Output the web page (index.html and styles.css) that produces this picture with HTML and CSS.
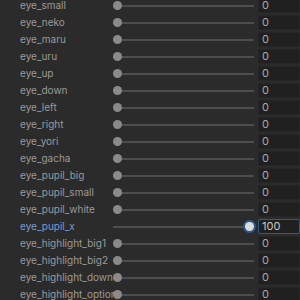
FILE: index.html
```html
<!DOCTYPE html>
<html>
<head>
<meta charset="utf-8">
<link rel="stylesheet" href="styles.css">
</head>
<body>
<div class="list">
  <div class="row"><span class="label">eye_small</span><div class="slider"><div class="track"></div><div class="knob" style="left:0%"></div></div><div class="num">0</div></div>
  <div class="row"><span class="label">eye_neko</span><div class="slider"><div class="track"></div><div class="knob" style="left:0%"></div></div><div class="num">0</div></div>
  <div class="row"><span class="label">eye_maru</span><div class="slider"><div class="track"></div><div class="knob" style="left:0%"></div></div><div class="num">0</div></div>
  <div class="row"><span class="label">eye_uru</span><div class="slider"><div class="track"></div><div class="knob" style="left:0%"></div></div><div class="num">0</div></div>
  <div class="row"><span class="label">eye_up</span><div class="slider"><div class="track"></div><div class="knob" style="left:0%"></div></div><div class="num">0</div></div>
  <div class="row"><span class="label">eye_down</span><div class="slider"><div class="track"></div><div class="knob" style="left:0%"></div></div><div class="num">0</div></div>
  <div class="row"><span class="label">eye_left</span><div class="slider"><div class="track"></div><div class="knob" style="left:0%"></div></div><div class="num">0</div></div>
  <div class="row"><span class="label">eye_right</span><div class="slider"><div class="track"></div><div class="knob" style="left:0%"></div></div><div class="num">0</div></div>
  <div class="row"><span class="label">eye_yori</span><div class="slider"><div class="track"></div><div class="knob" style="left:0%"></div></div><div class="num">0</div></div>
  <div class="row"><span class="label">eye_gacha</span><div class="slider"><div class="track"></div><div class="knob" style="left:0%"></div></div><div class="num">0</div></div>
  <div class="row"><span class="label">eye_pupil_big</span><div class="slider"><div class="track"></div><div class="knob" style="left:0%"></div></div><div class="num">0</div></div>
  <div class="row"><span class="label">eye_pupil_small</span><div class="slider"><div class="track"></div><div class="knob" style="left:0%"></div></div><div class="num">0</div></div>
  <div class="row"><span class="label">eye_pupil_white</span><div class="slider"><div class="track"></div><div class="knob" style="left:0%"></div></div><div class="num">0</div></div>
  <div class="row active"><span class="label">eye_pupil_x</span><div class="slider"><div class="track"></div><div class="knob max" style="left:100%"></div></div><div class="num">100</div></div>
  <div class="row"><span class="label">eye_highlight_big1</span><div class="slider"><div class="track"></div><div class="knob" style="left:0%"></div></div><div class="num">0</div></div>
  <div class="row"><span class="label">eye_highlight_big2</span><div class="slider"><div class="track"></div><div class="knob" style="left:0%"></div></div><div class="num">0</div></div>
  <div class="row"><span class="label">eye_highlight_down</span><div class="slider"><div class="track"></div><div class="knob" style="left:0%"></div></div><div class="num">0</div></div>
  <div class="row"><span class="label">eye_highlight_option</span><div class="slider"><div class="track"></div><div class="knob" style="left:0%"></div></div><div class="num">0</div></div>
</div>
</body>
</html>
```

FILE: styles.css
```css
html, body {
  margin: 0;
  padding: 0;
  background: #2b2b2b;
  overflow: hidden;
  height: 300px;
}
.list {
  margin-top: -3px;
  font-family: Inter, "Noto Sans", sans-serif;
  font-size: 10px;
}
.row {
  display: flex;
  align-items: center;
  height: 17px;
  padding-left: 20px;
}
.label {
  width: 94px;
  margin-right: -1px;
  flex: none;
  overflow: hidden;
  white-space: nowrap;
  color: #9a9a9a;
  line-height: 17px;
}
.row.active .label {
  color: #7a9bd0;
}
.slider {
  position: relative;
  flex: 1;
  height: 17px;
  margin-right: 4px;
  display: flex;
  align-items: center;
}
.track {
  width: 100%;
  height: 2px;
  background: #4e4e4e;
}
.knob {
  position: absolute;
  top: 4px;
  width: 9px;
  height: 9px;
  border-radius: 50%;
  background: #8a8a8a;
}
.knob.max {
  transform: translateX(-100%);
}
.row.active .knob {
  background: #dcdcdc;
  box-shadow: 0 0 0 2px #2e5a8a;
}
.num {
  flex: none;
  width: 37px;
  height: 13px;
  line-height: 13px;
  border: 1px solid #262626;
  border-radius: 2px;
  background: #202020;
  color: #a8a8a8;
  padding-left: 3px;
  box-sizing: content-box;
  font-size: 11px;
}
.row.active .num {
  border-color: #2d5a88;
  color: #c8c8c8;
}
```
